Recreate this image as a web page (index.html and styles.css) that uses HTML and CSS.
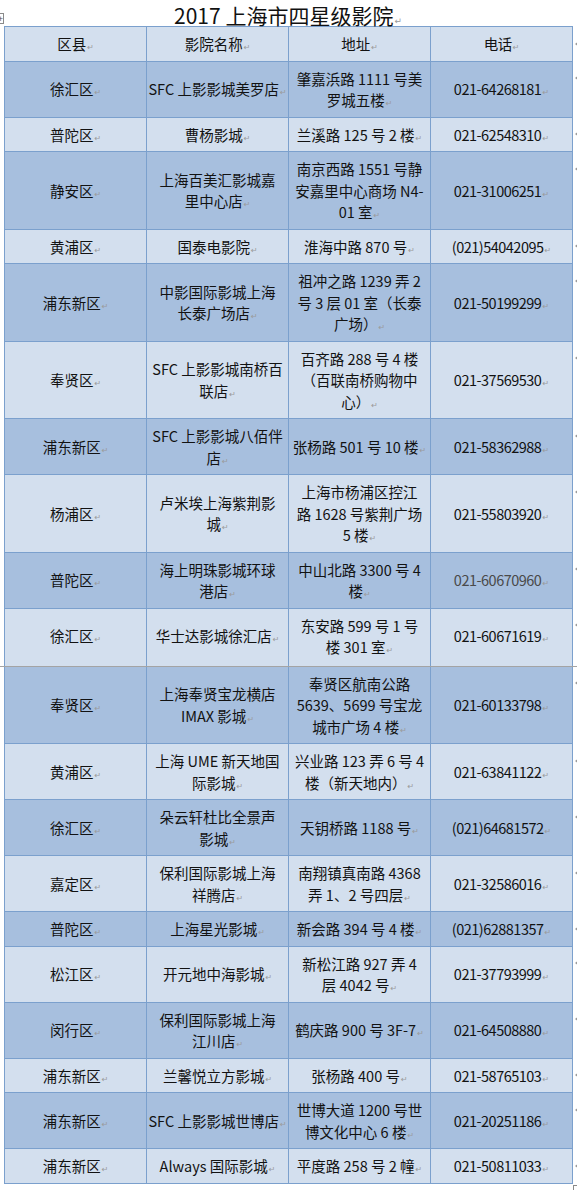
FILE: index.html
```html
<!DOCTYPE html>
<html lang="zh-CN">
<head>
<meta charset="utf-8">
<title>2017 上海市四星级影院</title>
<link rel="stylesheet" href="styles.css">
</head>
<body>
<div class="page">
  <span class="handle"><span class="cross">+</span></span>
  <h1 class="title">2017 上海市四星级影院<span class="pm">↵</span></h1>
  <table class="grid">
    <colgroup><col class="c"><col class="c"><col class="c"><col class="c"><col class="ec"></colgroup>
    <tr class="l"><td>区县<span class="pm">↵</span></td><td>影院名称<span class="pm">↵</span></td><td>地址<span class="pm">↵</span></td><td>电话<span class="pm">↵</span></td><td class="eor"><i class="mk"></i></td></tr>
    <tr class="d"><td>徐汇区<span class="pm">↵</span></td><td>SFC 上影影城美罗店<span class="pm">↵</span></td><td>肇嘉浜路 1111 号美<br>罗城五楼<span class="pm">↵</span></td><td>021-64268181<span class="pm">↵</span></td><td class="eor"><i class="mk"></i></td></tr>
    <tr class="l"><td>普陀区<span class="pm">↵</span></td><td>曹杨影城<span class="pm">↵</span></td><td>兰溪路 125 号 2 楼<span class="pm">↵</span></td><td>021-62548310<span class="pm">↵</span></td><td class="eor"><i class="mk"></i></td></tr>
    <tr class="d"><td>静安区<span class="pm">↵</span></td><td>上海百美汇影城嘉<br>里中心店<span class="pm">↵</span></td><td>南京西路 1551 号静<br>安嘉里中心商场 N4-<br>01 室<span class="pm">↵</span></td><td>021-31006251<span class="pm">↵</span></td><td class="eor"><i class="mk"></i></td></tr>
    <tr class="l"><td>黄浦区<span class="pm">↵</span></td><td>国泰电影院<span class="pm">↵</span></td><td>淮海中路 870 号<span class="pm">↵</span></td><td>(021)54042095<span class="pm">↵</span></td><td class="eor"><i class="mk"></i></td></tr>
    <tr class="d"><td>浦东新区<span class="pm">↵</span></td><td>中影国际影城上海<br>长泰广场店<span class="pm">↵</span></td><td>祖冲之路 1239 弄 2<br>号 3 层 01 室（长泰<br>广场）<span class="pm">↵</span></td><td>021-50199299<span class="pm">↵</span></td><td class="eor"><i class="mk"></i></td></tr>
    <tr class="l"><td>奉贤区<span class="pm">↵</span></td><td>SFC 上影影城南桥百<br>联店<span class="pm">↵</span></td><td>百齐路 288 号 4 楼<br>（百联南桥购物中<br>心）<span class="pm">↵</span></td><td>021-37569530<span class="pm">↵</span></td><td class="eor"><i class="mk"></i></td></tr>
    <tr class="d"><td>浦东新区<span class="pm">↵</span></td><td>SFC 上影影城八佰伴<br>店<span class="pm">↵</span></td><td>张杨路 501 号 10 楼<span class="pm">↵</span></td><td>021-58362988<span class="pm">↵</span></td><td class="eor"><i class="mk"></i></td></tr>
    <tr class="l"><td>杨浦区<span class="pm">↵</span></td><td>卢米埃上海紫荆影<br>城<span class="pm">↵</span></td><td>上海市杨浦区控江<br>路 1628 号紫荆广场<br>5 楼<span class="pm">↵</span></td><td>021-55803920<span class="pm">↵</span></td><td class="eor"><i class="mk"></i></td></tr>
    <tr class="d"><td>普陀区<span class="pm">↵</span></td><td>海上明珠影城环球<br>港店<span class="pm">↵</span></td><td>中山北路 3300 号 4<br>楼<span class="pm">↵</span></td><td class="soft">021-60670960<span class="pm">↵</span></td><td class="eor"><i class="mk"></i></td></tr>
    <tr class="l tall"><td>徐汇区<span class="pm">↵</span></td><td>华士达影城徐汇店<span class="pm">↵</span></td><td>东安路 599 号 1 号<br>楼 301 室<span class="pm">↵</span></td><td>021-60671619<span class="pm">↵</span></td><td class="eor"><i class="mk"></i></td></tr>
    <tr class="d pb"><td>奉贤区<span class="pm">↵</span></td><td>上海奉贤宝龙横店<br>IMAX 影城<span class="pm">↵</span></td><td>奉贤区航南公路<br>5639、5699 号宝龙<br>城市广场 4 楼<span class="pm">↵</span></td><td>021-60133798<span class="pm">↵</span></td><td class="eor"><i class="mk"></i></td></tr>
    <tr class="l"><td>黄浦区<span class="pm">↵</span></td><td>上海 UME 新天地国<br>际影城<span class="pm">↵</span></td><td>兴业路 123 弄 6 号 4<br>楼（新天地内）<span class="pm">↵</span></td><td>021-63841122<span class="pm">↵</span></td><td class="eor"><i class="mk"></i></td></tr>
    <tr class="d"><td>徐汇区<span class="pm">↵</span></td><td>朵云轩杜比全景声<br>影城<span class="pm">↵</span></td><td>天钥桥路 1188 号<span class="pm">↵</span></td><td>(021)64681572<span class="pm">↵</span></td><td class="eor"><i class="mk"></i></td></tr>
    <tr class="l"><td>嘉定区<span class="pm">↵</span></td><td>保利国际影城上海<br>祥腾店<span class="pm">↵</span></td><td>南翔镇真南路 4368<br>弄 1、2 号四层<span class="pm">↵</span></td><td>021-32586016<span class="pm">↵</span></td><td class="eor"><i class="mk"></i></td></tr>
    <tr class="d"><td>普陀区<span class="pm">↵</span></td><td>上海星光影城<span class="pm">↵</span></td><td>新会路 394 号 4 楼<span class="pm">↵</span></td><td>(021)62881357<span class="pm">↵</span></td><td class="eor"><i class="mk"></i></td></tr>
    <tr class="l"><td>松江区<span class="pm">↵</span></td><td>开元地中海影城<span class="pm">↵</span></td><td>新松江路 927 弄 4<br>层 4042 号<span class="pm">↵</span></td><td>021-37793999<span class="pm">↵</span></td><td class="eor"><i class="mk"></i></td></tr>
    <tr class="d"><td>闵行区<span class="pm">↵</span></td><td>保利国际影城上海<br>江川店<span class="pm">↵</span></td><td>鹤庆路 900 号 3F-7<span class="pm">↵</span></td><td>021-64508880<span class="pm">↵</span></td><td class="eor"><i class="mk"></i></td></tr>
    <tr class="l"><td>浦东新区<span class="pm">↵</span></td><td>兰馨悦立方影城<span class="pm">↵</span></td><td>张杨路 400 号<span class="pm">↵</span></td><td>021-58765103<span class="pm">↵</span></td><td class="eor"><i class="mk"></i></td></tr>
    <tr class="d"><td>浦东新区<span class="pm">↵</span></td><td>SFC 上影影城世博店<span class="pm">↵</span></td><td>世博大道 1200 号世<br>博文化中心 6 楼<span class="pm">↵</span></td><td>021-20251186<span class="pm">↵</span></td><td class="eor"><i class="mk"></i></td></tr>
    <tr class="l"><td>浦东新区<span class="pm">↵</span></td><td>Always 国际影城<span class="pm">↵</span></td><td>平度路 258 号 2 幢<span class="pm">↵</span></td><td>021-50811033<span class="pm">↵</span></td><td class="eor"><i class="mk"></i></td></tr>
  </table>
  <div class="corner"></div>
</div>
</body>
</html>
```

FILE: styles.css
```css
html, body {
  margin: 0;
  padding: 0;
  background: #ffffff;
}

body {
  font-family: "Noto Sans CJK SC", "Noto Sans", sans-serif;
  color: #121212;
  width: 577px;
  overflow: hidden;
}

.page {
  position: relative;
  padding-left: 4px;
}

.handle {
  position: absolute;
  left: -6px;
  top: 13px;
  width: 8px;
  height: 9px;
  border: 1px solid #8a8a8a;
  background: #ffffff;
  overflow: hidden;
}

.cross {
  display: block;
  font-size: 9px;
  line-height: 9px;
  text-align: right;
  color: #555;
}

.title {
  margin: 0;
  width: 568px;
  height: 26px;
  text-align: center;
  font-size: 21px;
  line-height: 30px;
  font-weight: normal;
  color: #111;
}

.grid {
  border-collapse: collapse;
  table-layout: fixed;
  width: 573px;
  font-size: 14.5px;
}

.c {
  width: 142px;
}

.ec {
  width: 5px;
}

.grid td {
  border: 1px solid #7ba0cd;
  text-align: center;
  vertical-align: middle;
  padding: 6px 0;
  line-height: 21.5px;
  white-space: nowrap;
  overflow: visible;
}

.grid td:nth-child(4) {
  letter-spacing: -0.5px;
}

.grid tr.l td {
  background: #d3dfee;
}

.grid tr.d td {
  background: #a7bfde;
}

.grid tr.tall td {
  padding-bottom: 8px;
}

.grid td.soft {
  color: #4a4a4a;
}

.grid tr td.eor {
  border: none;
  background: transparent;
  padding: 0 0 0 2px;
  vertical-align: top;
  text-align: left;
}

.mk {
  display: block;
  width: 0;
  height: 0;
  margin-top: 14px;
  border-right: 4px solid #9a9a9a;
  border-top: 3px solid transparent;
  border-bottom: 3px solid transparent;
}

.pm {
  font-family: "DejaVu Sans", sans-serif;
  font-size: 8px;
  line-height: 0;
  color: #9a9a9a;
  margin-left: 1px;
  letter-spacing: 0;
}

.title .pm {
  font-size: 9px;
}

.pb td:first-child {
  position: relative;
}

.pb td:first-child::before {
  content: "";
  position: absolute;
  left: -6px;
  top: -1px;
  width: 580px;
  height: 1px;
  background: #a4a4a4;
}

.corner {
  margin: 1px 0 0 569px;
  width: 6px;
  height: 6px;
  border-left: 1px solid #8a8a8a;
  border-top: 1px solid #8a8a8a;
}
```
